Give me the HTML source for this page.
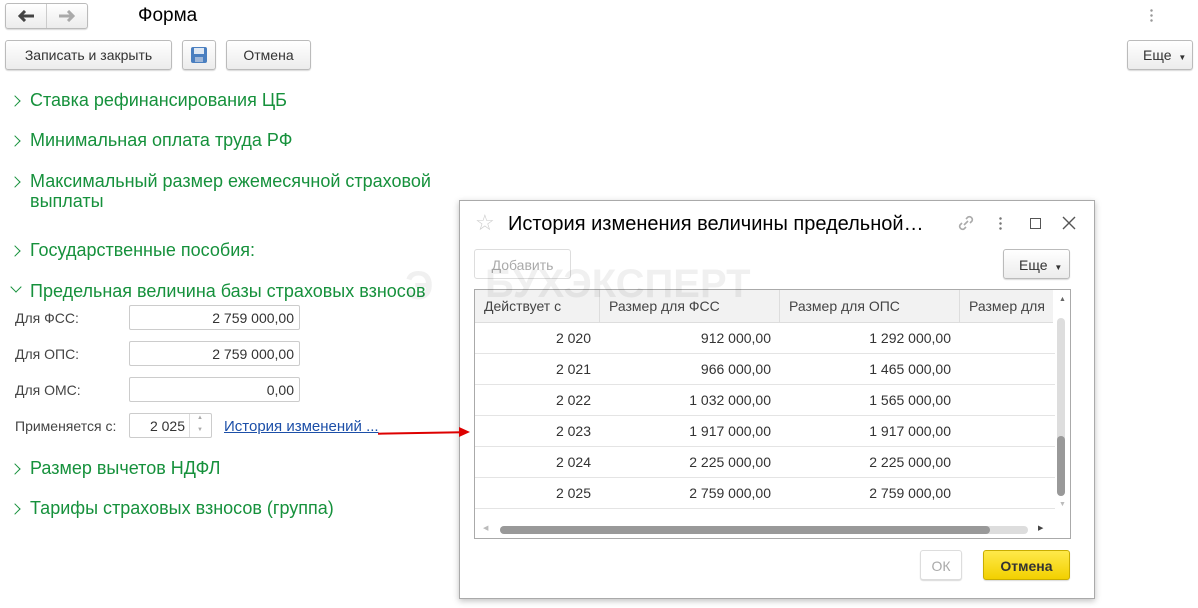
<!DOCTYPE html>
<html><head><meta charset="utf-8"><style>
*{box-sizing:border-box;margin:0;padding:0}
body{width:1198px;height:608px;background:#fff;font-family:"Liberation Sans",sans-serif;position:relative;overflow:hidden;color:#333}
.a{position:absolute}
.btn{position:absolute;border:1px solid #bbb;border-radius:3px;background:linear-gradient(#fff,#ececec);font-size:14px;color:#333;text-align:center;box-shadow:0 1px 1px rgba(0,0,0,.15)}
.g{position:absolute;left:10px;color:#16913c;font-size:18px;white-space:nowrap}
.g:before{content:"";position:absolute;left:1px;top:7px;width:7px;height:7px;border-top:1.5px solid #16913c;border-right:1.5px solid #16913c;transform:rotate(45deg)}
.g span{margin-left:20px;display:inline-block}
.lbl{position:absolute;left:15px;font-size:14px;color:#444}
.inp{position:absolute;left:129px;width:171px;height:25px;border:1px solid #ccc;border-radius:2px;font-size:14px;text-align:right;padding:4px 5px;color:#333}
.tbl{position:absolute;left:474px;top:289px;width:597px;height:250px;border:1px solid #aaa}
.row{position:absolute;left:0;width:580px;height:31px;border-bottom:1px solid #e4e4e4;font-size:14px;color:#333}
.row div{position:absolute;top:7px;text-align:right}
</style></head><body>
<div class="btn" style="left:5px;top:3px;width:83px;height:26px"></div>
<div class="a" style="left:46px;top:4px;width:1px;height:24px;background:#ccc"></div>
<svg class="a" style="left:17px;top:10px" width="18" height="12"><path d="M17 6H4M8 1L3 6L8 11" stroke="#444" stroke-width="3" fill="none"/></svg>
<svg class="a" style="left:58px;top:10px" width="18" height="12"><path d="M1 6H14M10 1L15 6L10 11" stroke="#aaa" stroke-width="3" fill="none"/></svg>
<div class="a" style="left:138px;top:5px;font-size:19px;color:#000">Форма</div>
<div class="a" style="left:1150px;top:8px;width:3px;height:14px;background:radial-gradient(circle,#999 1px,transparent 1.5px) 0 0/3px 5px"></div>
<div class="btn" style="left:5px;top:40px;width:167px;height:30px;padding-top:6px">Записать и закрыть</div>
<div class="btn" style="left:182px;top:40px;width:34px;height:30px"></div>
<div class="a" style="left:191px;top:47px;width:16px;height:16px;background:#4a7fc0;border-radius:2px"><div class="a" style="left:3px;top:1px;width:10px;height:6px;background:#dfe8f3"></div><div class="a" style="left:4px;top:10px;width:8px;height:5px;background:#9fb7d8"></div></div>
<div class="btn" style="left:226px;top:40px;width:85px;height:30px;padding-top:6px">Отмена</div>
<div class="btn" style="left:1127px;top:40px;width:66px;height:30px;padding-top:6px;text-align:left;padding-left:15px">Еще <span style="font-size:8px;margin-left:3px">&#9660;</span></div>

<div class="g" style="top:90px"><span>Ставка рефинансирования ЦБ</span></div>
<div class="g" style="top:130px"><span>Минимальная оплата труда РФ</span></div>
<div class="g" style="top:171px;line-height:20px"><span>Максимальный размер ежемесячной страховой<br>выплаты</span></div>
<div class="g" style="top:240px"><span>Государственные пособия:</span></div>
<div class="a" style="left:10px;top:281px;color:#16913c;font-size:18px"><span style="position:absolute;left:2px;top:2px;width:8px;height:8px;border-right:1.5px solid #16913c;border-bottom:1.5px solid #16913c;transform:rotate(45deg)"></span><span style="margin-left:20px;white-space:nowrap">Предельная величина базы страховых взносов</span></div>
<div class="lbl" style="top:310px">Для ФСС:</div><div class="inp" style="top:305px">2 759 000,00</div>
<div class="lbl" style="top:346px">Для ОПС:</div><div class="inp" style="top:341px">2 759 000,00</div>
<div class="lbl" style="top:382px">Для ОМС:</div><div class="inp" style="top:377px">0,00</div>
<div class="lbl" style="top:418px">Применяется с:</div>
<div class="inp" style="top:413px;width:83px;padding-right:26px">2 025</div>
<div class="a" style="left:189px;top:414px;width:1px;height:23px;background:#ddd"></div>
<div class="a" style="left:197px;top:415px;font-size:6px;color:#aaa">&#9650;</div><div class="a" style="left:197px;top:427px;font-size:6px;color:#aaa">&#9660;</div>
<div class="a" style="left:224px;top:418px;font-size:15px;color:#1c4fa8;text-decoration:underline">История изменений ...</div>
<div class="g" style="top:458px"><span>Размер вычетов НДФЛ</span></div>
<div class="g" style="top:498px"><span>Тарифы страховых взносов (группа)</span></div>

<div class="a" style="left:459px;top:200px;width:636px;height:399px;border:1px solid #aaa;background:#fff;box-shadow:0 2px 6px rgba(0,0,0,.25)"></div>
<div class="a" style="left:475px;top:210px;font-size:22px;color:#ccc">&#9734;</div>
<div class="a" style="left:508px;top:213px;font-size:20px;color:#000">История изменения величины предельной…</div>
<svg class="a" style="left:956px;top:213px" width="20" height="20"><path d="M8 12L12 8M6 10L4 12a3 3 0 0 0 4 4L10 14M10 6L12 4a3 3 0 0 1 4 4L14 10" stroke="#aaa" stroke-width="1.6" fill="none"/></svg>
<div class="a" style="left:999px;top:216px;width:3px;height:14px;background:radial-gradient(circle,#777 1px,transparent 1.5px) 0 0/3px 5px"></div>
<div class="a" style="left:1030px;top:218px;width:11px;height:11px;border:1.2px solid #555"></div>
<svg class="a" style="left:1062px;top:216px" width="14" height="14"><path d="M1 1L13 13M13 1L1 13" stroke="#555" stroke-width="1.4"/></svg>
<div class="btn" style="left:474px;top:249px;width:97px;height:30px;padding-top:7px;color:#aaa;background:#fff;box-shadow:none;border-color:#ddd">Добавить</div>
<div class="btn" style="left:1003px;top:249px;width:67px;height:30px;padding-top:7px;text-align:left;padding-left:15px">Еще <span style="font-size:8px;margin-left:3px">&#9660;</span></div>

<div class="tbl">
<div class="a" style="left:0;top:0;width:578px;height:33px;background:#f2f2f2;border-bottom:1px solid #ddd;font-size:14px;color:#444">
<div class="a" style="left:9px;top:8px">Действует с</div>
<div class="a" style="left:124px;top:0;width:1px;height:33px;background:#ddd"></div>
<div class="a" style="left:134px;top:8px">Размер для ФСС</div>
<div class="a" style="left:304px;top:0;width:1px;height:33px;background:#ddd"></div>
<div class="a" style="left:314px;top:8px">Размер для ОПС</div>
<div class="a" style="left:484px;top:0;width:1px;height:33px;background:#ddd"></div>
<div class="a" style="left:494px;top:8px">Размер для</div>
</div>
<div class="row" style="top:33px"><div style="right:464px">2 020</div><div style="right:284px">912 000,00</div><div style="right:104px">1 292 000,00</div></div>
<div class="row" style="top:64px"><div style="right:464px">2 021</div><div style="right:284px">966 000,00</div><div style="right:104px">1 465 000,00</div></div>
<div class="row" style="top:95px"><div style="right:464px">2 022</div><div style="right:284px">1 032 000,00</div><div style="right:104px">1 565 000,00</div></div>
<div class="row" style="top:126px"><div style="right:464px">2 023</div><div style="right:284px">1 917 000,00</div><div style="right:104px">1 917 000,00</div></div>
<div class="row" style="top:157px"><div style="right:464px">2 024</div><div style="right:284px">2 225 000,00</div><div style="right:104px">2 225 000,00</div></div>
<div class="row" style="top:188px"><div style="right:464px">2 025</div><div style="right:284px">2 759 000,00</div><div style="right:104px">2 759 000,00</div></div>
<div class="a" style="left:584px;top:6px;font-size:7px;color:#666">&#9650;</div>
<div class="a" style="left:582px;top:28px;width:8px;height:178px;background:#ddd;border-radius:4px"></div>
<div class="a" style="left:582px;top:146px;width:8px;height:60px;background:#999;border-radius:4px"></div>
<div class="a" style="left:584px;top:211px;font-size:7px;color:#bbb">&#9660;</div>
<div class="a" style="left:8px;top:234px;font-size:7px;color:#bbb">&#9664;</div>
<div class="a" style="left:25px;top:236px;width:528px;height:8px;background:#ddd;border-radius:4px"></div>
<div class="a" style="left:25px;top:236px;width:490px;height:8px;background:#999;border-radius:4px"></div>
<div class="a" style="left:563px;top:234px;font-size:7px;color:#444">&#9654;</div>
</div>

<div class="btn" style="left:920px;top:550px;width:42px;height:30px;padding-top:7px;color:#aaa;background:#fff;border-color:#ddd">ОК</div>
<div class="btn" style="left:983px;top:550px;width:87px;height:30px;padding-top:7px;background:linear-gradient(#ffe94a,#f2d000);border-color:#c9ad00;font-weight:bold;color:#333">Отмена</div>

<div class="a" style="left:405px;top:264px;width:60px;height:40px;color:rgba(0,0,0,.06);font-size:40px;font-weight:bold">&#1069;</div>
<div class="a" style="left:485px;top:262px;font-size:40px;font-weight:bold;color:rgba(0,0,0,.06)">БУХЭКСПЕРТ</div>
<div class="a" style="left:378px;top:432px;width:84px;height:2px;background:#d00;transform:rotate(-1deg)"></div>
<div class="a" style="left:459px;top:427px;width:0;height:0;border-left:11px solid #d00;border-top:5px solid transparent;border-bottom:5px solid transparent"></div>
</body></html>
